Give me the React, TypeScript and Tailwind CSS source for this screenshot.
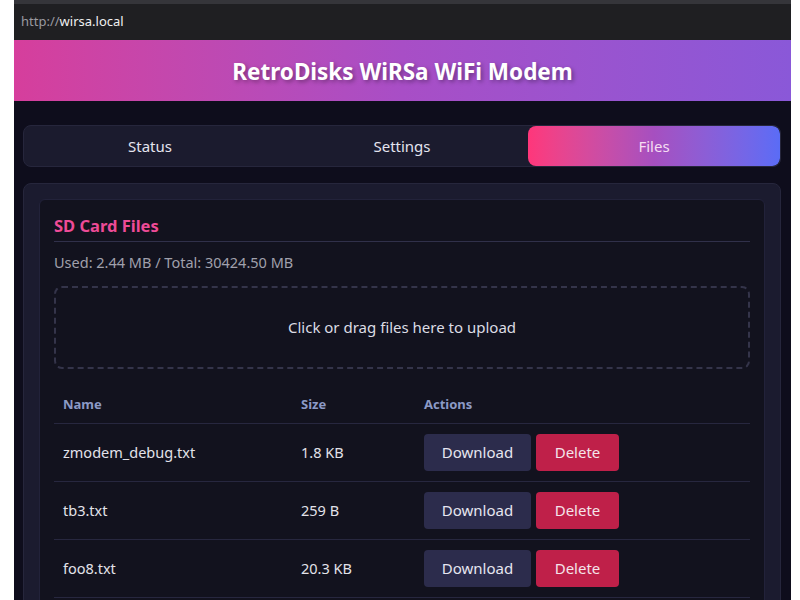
import React from "react";

const files = [
  { name: "zmodem_debug.txt", size: "1.8 KB" },
  { name: "tb3.txt", size: "259 B" },
  { name: "foo8.txt", size: "20.3 KB" },
];

function Tabs() {
  return (
    <div className="flex h-[42px] shrink-0 rounded-lg border border-[#26263c] bg-[#1b1b2e] overflow-hidden">
      <button className="flex-1 text-[15px] text-[#e4e4ee]">Status</button>
      <button className="flex-1 text-[15px] text-[#e4e4ee]">Settings</button>
      <button className="flex-1 rounded-lg bg-gradient-to-r from-[#ff367a] via-[#a64fc0] to-[#5a6cf6] text-[15px] text-[#f6dcf2]">
        Files
      </button>
    </div>
  );
}

function FileRow({ name, size }: { name: string; size: string }) {
  return (
    <tr className="border-b border-[#27273f]">
      <td className="h-[58px] px-[9px] text-[14.5px] text-[#e2e2ea]">{name}</td>
      <td className="px-[10px] text-[14.5px] text-[#e2e2ea]">{size}</td>
      <td className="px-[10px]">
        <div className="flex gap-[5px]">
          <button className="h-[37px] w-[107px] rounded bg-[#2c2c4c] text-[15px] text-[#e6e6f0]">
            Download
          </button>
          <button className="h-[37px] w-[83px] rounded bg-[#bf2049] text-[15px] text-[#f4e4ea]">
            Delete
          </button>
        </div>
      </td>
    </tr>
  );
}

export default function App() {
  return (
    <div
      className="flex h-[600px] overflow-hidden bg-white pl-[14px] pr-[9px]"
      style={{ fontFamily: '"Noto Sans", "Open Sans", sans-serif' }}
    >
      <div className="flex flex-1 flex-col bg-[#0e0d1c]">
        <div className="h-[4px] shrink-0 bg-[#35353a]" />
        <div className="flex h-[36px] shrink-0 items-center bg-[#1f1f22] px-[7px] text-[13px]">
          <span className="text-[#9a9aa0]">http://</span>
          <span className="text-[#f0f0f0]">wirsa.local</span>
        </div>
        <div className="flex h-[61px] shrink-0 items-center justify-center bg-gradient-to-r from-[#d63e9c] via-[#a84ec6] to-[#8a58d8] pt-[3px]">
          <h1 className="text-[22.5px] font-bold text-white [text-shadow:2px_2px_4px_rgba(0,0,0,0.35)]">
            RetroDisks WiRSa WiFi Modem
          </h1>
        </div>

        <div className="flex shrink-0 flex-col gap-[16px] px-[9px] pr-[10px] pt-[24px]">
          <Tabs />

          <div className="rounded-lg border border-[#26263c] bg-[#1b1b2f] px-[15px] pt-[15px] pb-[15px]">
            <div className="rounded-md border border-[#22223a] bg-[#12121e] px-[14px] pt-[14px] pb-[20px]">
              <h2 className="border-b border-[#30304a] pb-[2px] text-[16.5px] font-bold text-[#ee4b97]">
                SD Card Files
              </h2>
              <p className="mt-[10px] text-[14.5px] text-[#a0a0ac]">
                Used: 2.44 MB / Total: 30424.50 MB
              </p>
              <div className="mt-[12px] flex h-[83px] items-center justify-center rounded-lg border-2 border-dashed border-[#34344a] text-[15px] text-[#dcdce4]">
                Click or drag files here to upload
              </div>

              <table className="mt-[17px] w-full border-collapse text-left">
                <thead>
                  <tr className="border-b border-[#27273f]">
                    <th className="h-[38px] w-[237px] px-[9px] text-[13px] font-bold text-[#8c9ac6]">
                      Name
                    </th>
                    <th className="w-[123px] px-[10px] text-[13px] font-bold text-[#8c9ac6]">
                      Size
                    </th>
                    <th className="px-[10px] text-[13px] font-bold text-[#8c9ac6]">
                      Actions
                    </th>
                  </tr>
                </thead>
                <tbody>
                  {files.map((f) => (
                    <FileRow key={f.name} name={f.name} size={f.size} />
                  ))}
                </tbody>
              </table>
            </div>
          </div>
        </div>
      </div>
    </div>
  );
}
